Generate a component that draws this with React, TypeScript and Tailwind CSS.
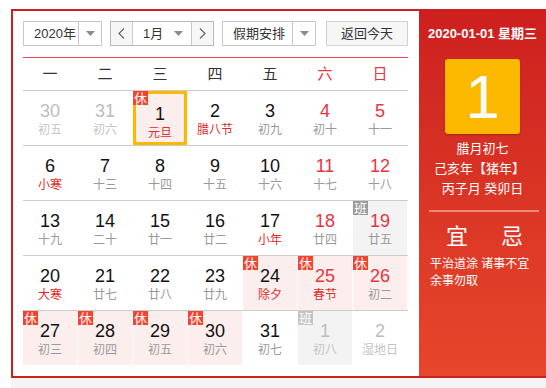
import React from 'react';

type Cell = {
  d: number;
  l: string;
  num?: 'red' | 'out';
  lun?: 'red' | 'out';
  bg?: 'rest' | 'work';
  badge?: '休' | '班' | '班out';
  sel?: boolean;
};

const weeks: Cell[][] = [
  [
    { d: 30, l: '初五', num: 'out', lun: 'out' },
    { d: 31, l: '初六', num: 'out', lun: 'out' },
    { d: 1, l: '元旦', lun: 'red', bg: 'rest', badge: '休', sel: true },
    { d: 2, l: '腊八节', lun: 'red' },
    { d: 3, l: '初九' },
    { d: 4, l: '初十', num: 'red' },
    { d: 5, l: '十一', num: 'red' },
  ],
  [
    { d: 6, l: '小寒', lun: 'red' },
    { d: 7, l: '十三' },
    { d: 8, l: '十四' },
    { d: 9, l: '十五' },
    { d: 10, l: '十六' },
    { d: 11, l: '十七', num: 'red' },
    { d: 12, l: '十八', num: 'red' },
  ],
  [
    { d: 13, l: '十九' },
    { d: 14, l: '二十' },
    { d: 15, l: '廿一' },
    { d: 16, l: '廿二' },
    { d: 17, l: '小年', lun: 'red' },
    { d: 18, l: '廿四', num: 'red' },
    { d: 19, l: '廿五', num: 'red', bg: 'work', badge: '班' },
  ],
  [
    { d: 20, l: '大寒', lun: 'red' },
    { d: 21, l: '廿七' },
    { d: 22, l: '廿八' },
    { d: 23, l: '廿九' },
    { d: 24, l: '除夕', lun: 'red', bg: 'rest', badge: '休' },
    { d: 25, l: '春节', num: 'red', lun: 'red', bg: 'rest', badge: '休' },
    { d: 26, l: '初二', num: 'red', bg: 'rest', badge: '休' },
  ],
  [
    { d: 27, l: '初三', bg: 'rest', badge: '休' },
    { d: 28, l: '初四', bg: 'rest', badge: '休' },
    { d: 29, l: '初五', bg: 'rest', badge: '休' },
    { d: 30, l: '初六', bg: 'rest', badge: '休' },
    { d: 31, l: '初七' },
    { d: 1, l: '初八', num: 'out', lun: 'out', bg: 'work', badge: '班out' },
    { d: 2, l: '湿地日', num: 'out', lun: 'out' },
  ],
];

const Caret = () => (
  <svg width="9" height="5" viewBox="0 0 9 5">
    <path d="M0 0h9L4.5 5z" fill="#8a8a8a" />
  </svg>
);

const Chevron = ({ dir }: { dir: 'l' | 'r' }) => (
  <svg width="7" height="11" viewBox="0 0 7 11">
    <polyline
      points={dir === 'l' ? '6,0.5 1,5.5 6,10.5' : '1,0.5 6,5.5 1,10.5'}
      fill="none"
      stroke="#666"
      strokeWidth="1.2"
    />
  </svg>
);

const DayCell = ({ c }: { c: Cell }) => {
  const bg = c.bg === 'rest' ? 'bg-[#fdeeee]' : c.bg === 'work' ? 'bg-[#f3f3f3]' : 'bg-white';
  const numColor = c.num === 'red' ? 'text-[#e8343f]' : c.num === 'out' ? 'text-[#bdbdbd]' : 'text-[#111]';
  const lunColor = c.lun === 'red' ? 'text-[#e22a2a]' : c.lun === 'out' ? 'text-[#c4c4c4]' : 'text-[#999]';
  return (
    <div className={`relative h-[54px] flex flex-col items-center pt-[9px] ${bg} ${c.sel ? 'border-[3px] border-[#ffb800] pt-[6px]' : ''}`}>
      {c.badge && (
        <span
          className={`absolute ${c.sel ? '-top-[3px] -left-[3px]' : 'top-0 left-0'} w-[15px] h-[14px] flex items-center justify-center text-[13px] leading-none text-white ${
            c.badge === '休' ? 'bg-[#f5432f]' : c.badge === '班' ? 'bg-[#9b9b9b]' : 'bg-[#c4c4c4]'
          }`}
        >
          {c.badge === '休' ? '休' : '班'}
        </span>
      )}
      <span className={`text-[18px] leading-[22px] ${numColor}`}>{c.d}</span>
      <span className={`text-[12px] leading-[16px] ${lunColor}`}>{c.l}</span>
    </div>
  );
};

export default function App() {
  return (
    <div className="w-[546px] h-[388px] bg-white font-[family-name:'Liberation_Sans','Noto_Sans_CJK_SC',sans-serif] text-[#333]">
      <div className="pt-[9px] pl-[11px]">
        <div className="flex w-[535px] h-[369px] border-2 border-r-0 border-[#cc1f1f]">
          {/* calendar */}
          <div className="w-[406px] pt-[10px] pl-[10px] pr-[11px]">
            <div className="flex h-[25px] text-[13px]">
              <div className="flex w-[79px] border border-[#c8c8c8] bg-white">
                <span className="flex-1 pl-[10px] leading-[23px]">2020年</span>
                <span className="w-[23px] border-l border-[#c8c8c8] flex items-center justify-center">
                  <Caret />
                </span>
              </div>
              <div className="flex w-[104px] ml-[8px] border border-[#b8b8b8]">
                <span className="w-[22px] bg-[#f6f6f6] flex items-center justify-center border-r border-[#c8c8c8]">
                  <Chevron dir="l" />
                </span>
                <span className="flex-1 flex items-center justify-between pl-[10px] pr-[8px] bg-white">
                  <span>1月</span>
                  <Caret />
                </span>
                <span className="w-[22px] bg-[#f6f6f6] flex items-center justify-center border-l border-[#c8c8c8]">
                  <Chevron dir="r" />
                </span>
              </div>
              <div className="flex w-[94px] ml-[8px] border border-[#c8c8c8] bg-white">
                <span className="flex-1 pl-[10px] leading-[23px]">假期安排</span>
                <span className="w-[23px] border-l border-[#c8c8c8] flex items-center justify-center">
                  <Caret />
                </span>
              </div>
              <button className="w-[82px] ml-[10px] border border-[#d0d0d0] bg-[#f6f6f6] text-[13px] text-[#333]">
                返回今天
              </button>
            </div>
            <div className="mt-[11px] h-px bg-[#e64a4a]" />
            <div className="grid grid-cols-[repeat(7,54px)] gap-x-px h-[33px] items-center text-[15px] border-b border-[#cccccc]">
              {['一', '二', '三', '四', '五', '六', '日'].map((w, i) => (
                <span key={w} className={`text-center ${i > 4 ? 'text-[#e8343f]' : 'text-[#333]'}`}>
                  {w}
                </span>
              ))}
            </div>
            {weeks.map((row, i) => (
              <div
                key={i}
                className={`grid grid-cols-[repeat(7,54px)] gap-x-px ${i < weeks.length - 1 ? 'border-b border-[#cccccc]' : ''}`}
              >
                {row.map((c, j) => (
                  <DayCell key={j} c={c} />
                ))}
              </div>
            ))}
          </div>
          {/* side panel */}
          <div className="flex-1 flex flex-col items-center bg-gradient-to-b from-[#cd1f1f] to-[#e7462b] text-white">
            <div className="mt-[14px] text-[13px] leading-[18px] font-semibold">2020-01-01 星期三</div>
            <div className="mt-[16px] w-[75px] h-[75px] rounded-[3px] bg-[#fdb800] flex items-center justify-center text-[62px] leading-none shadow-[0_1px_2px_rgba(0,0,0,0.25)]">
              1
            </div>
            <div className="mt-[5px] text-[13px] leading-[20px] text-center">
              <div>腊月初七</div>
              <div className="-ml-[6px]">己亥年【猪年】</div>
              <div>丙子月 癸卯日</div>
            </div>
            <div className="mt-[11px] self-start ml-[10px] w-[110px] h-[2px] bg-[#ee8a7c]" />
            <div className="mt-[11px] self-start ml-[27px] flex text-[22px] leading-[28px]">
              <span>宜</span>
              <span className="ml-[33px]">忌</span>
            </div>
            <div className="mt-[5px] self-start ml-[11px] text-[12px] leading-[17px]">
              <div>平治道涂 诸事不宜</div>
              <div>余事勿取</div>
            </div>
          </div>
        </div>
        <div className="h-[10px] bg-[#f4f4f4]" />
      </div>
    </div>
  );
}
